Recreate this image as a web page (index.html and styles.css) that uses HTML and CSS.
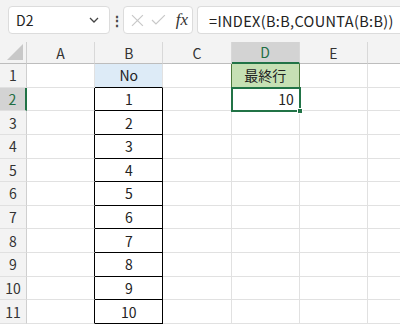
FILE: index.html
```html
<!DOCTYPE html>
<html lang="ja">
<head>
    <meta charset="UTF-8">
    <title>Sheet</title>
    <link rel="stylesheet" href="styles.css">
</head>
<body>
    <div class="excel">
        <div class="excel__bar">
            <div class="excel__namebox">
                <span>D2</span>
                <svg width="10" height="6" viewBox="0 0 10 6"><path d="M1 1l4 4 4-4" fill="none" stroke="#444" stroke-width="1.3"/></svg>
            </div>
            <div class="excel__dots">⋮</div>
            <div class="excel__fxbox">
                <svg width="13" height="13" viewBox="0 0 13 13"><path d="M1 1l11 11M12 1L1 12" stroke="#c8c8c8" stroke-width="1.2"/></svg>
                <svg width="15" height="12" viewBox="0 0 15 12"><path d="M1 6l4 4 9-9" fill="none" stroke="#c8c8c8" stroke-width="1.2"/></svg>
                <span class="excel__fx">fx</span>
            </div>
            <div class="excel__formula">=INDEX(B:B,COUNTA(B:B))</div>
        </div>

        <div class="sheet">
            <div class="sheet__corner"><span></span></div>
            <div class="sheet__col">A</div>
            <div class="sheet__col">B</div>
            <div class="sheet__col">C</div>
            <div class="sheet__col sheet__col--active">D</div>
            <div class="sheet__col">E</div>
            <div class="sheet__col sheet__col--last"></div>
        </div>
        <div class="sheet sheet--body"></div>
    </div>

    <script>
        let body = document.querySelector('.sheet--body')

        for (let r = 1; r <= 11; r++) {
            let head = document.createElement('div')
            head.className = 'sheet__row' + (r == 2 ? ' sheet__row--active' : '')
            head.textContent = r
            body.appendChild(head)

            for (let c = 0; c < 6; c++) {
                let cell = document.createElement('div')
                cell.className = 'sheet__cell'
                if (c == 0) cell.classList.add('sheet__cell--edge')
                if (c == 1) {
                    cell.classList.add(r == 1 ? 'sheet__cell--title' : 'sheet__cell--boxed')
                    cell.textContent = r == 1 ? 'No' : r - 1
                }
                if (c == 2 && r == 1) cell.classList.add('sheet__cell--greenedge')
                if (c == 3 && r == 1) {
                    cell.classList.add('sheet__cell--green')
                    cell.textContent = '最終行'
                }
                if (c == 3 && r == 2) {
                    cell.classList.add('sheet__cell--selected')
                    cell.textContent = '10'
                }
                body.appendChild(cell)
            }
        }
    </script>
</body>
</html>
```

FILE: styles.css
```css
body {
    margin: 0;
    font-family: "Noto Sans CJK JP", "Noto Sans", sans-serif;
    color: #222;
    background: #fff;
    overflow: hidden;
}

.excel {
    width: 400px;
    height: 327px;
    overflow: hidden;
}

.excel__bar {
    height: 42px;
    background-color: #f3f3f3;
    display: flex;
    align-items: flex-start;
    padding: 6px 0 0 8px;
    box-sizing: border-box;
}

.excel__namebox,
.excel__fxbox,
.excel__formula {
    height: 28px;
    background: #fff;
    border: 1px solid #dcdcdc;
    border-radius: 4px;
    box-sizing: border-box;
    display: flex;
    align-items: center;
}

.excel__namebox {
    width: 102px;
    padding: 0 10px 0 7px;
    justify-content: space-between;
    font-size: 14px;
}

.excel__dots {
    width: 13px;
    text-align: center;
    font-size: 14px;
    line-height: 28px;
    color: #444;
    font-weight: bold;
}

.excel__fxbox {
    width: 70px;
    padding: 0 4px 0 7px;
    gap: 7px;
}

.excel__fx {
    font-family: "Liberation Serif", serif;
    font-style: italic;
    font-size: 17px;
    color: #333;
    margin-left: 3px;
}

.excel__formula {
    margin-left: 4px;
    flex: 1;
    border-right: none;
    border-radius: 4px 0 0 4px;
    padding-left: 11px;
    font-size: 14.5px;
    letter-spacing: 0.35px;
    white-space: nowrap;
}

.sheet {
    display: grid;
    grid-template-columns: 27px repeat(6, 68.2px);
    grid-template-rows: 22px;
}

.sheet--body {
    grid-template-rows: repeat(11, 23.64px);
}

.sheet__corner,
.sheet__col,
.sheet__row {
    background-color: #f3f3f3;
    box-sizing: border-box;
    color: #333;
    font-size: 14px;
    display: flex;
    align-items: center;
    justify-content: center;
}

.sheet__corner {
    border-right: 1px solid #cfcfcf;
    border-bottom: 1px solid #bdbdbd;
    align-items: flex-end;
    justify-content: flex-end;
    padding: 0 3px 3px 0;
}

.sheet__corner span {
    width: 0;
    height: 0;
    border-left: 16px solid transparent;
    border-bottom: 16px solid #c8c8c8;
}

.sheet__col {
    border-right: 1px solid #d8d8d8;
    border-bottom: 1px solid #bdbdbd;
}

.sheet__col--last {
    border-right: none;
}

.sheet__col--active {
    background-color: #d3d3d3;
    color: #1f6e43;
    border-bottom: 2px solid #217346;
}

.sheet__row {
    border-right: 1px solid #cfcfcf;
    border-bottom: 1px solid #e0e0e0;
}

.sheet__row--active {
    background-color: #d3d3d3;
    color: #1f6e43;
    border-right: 2px solid #217346;
}

.sheet__cell {
    box-sizing: border-box;
    border-right: 1px solid #e1e1e1;
    border-bottom: 1px solid #e1e1e1;
    font-size: 14px;
    display: flex;
    align-items: center;
    justify-content: center;
}

.sheet__cell--edge {
    border-right-color: #000;
}

.sheet__row:first-child + .sheet__cell--edge {
    border-right-color: #e1e1e1;
}

.sheet__cell--title {
    background-color: #ddebf7;
    border-bottom-color: #000;
}

.sheet__cell--boxed {
    border-right-color: #000;
    border-bottom-color: #000;
}

.sheet__cell--greenedge {
    border-right-color: #4e7a3c;
}

.sheet__cell--green {
    background-color: #c6e0b4;
    border-right-color: #4e7a3c;
}

.sheet__cell--selected {
    position: relative;
    justify-content: flex-end;
    padding-right: 5px;
    outline: 2px solid #217346;
    outline-offset: -1px;
}

.sheet__cell--selected::after {
    content: "";
    position: absolute;
    right: -4px;
    bottom: -4px;
    width: 6px;
    height: 6px;
    background: #217346;
    border: 1px solid #fff;
    box-sizing: border-box;
}
```
